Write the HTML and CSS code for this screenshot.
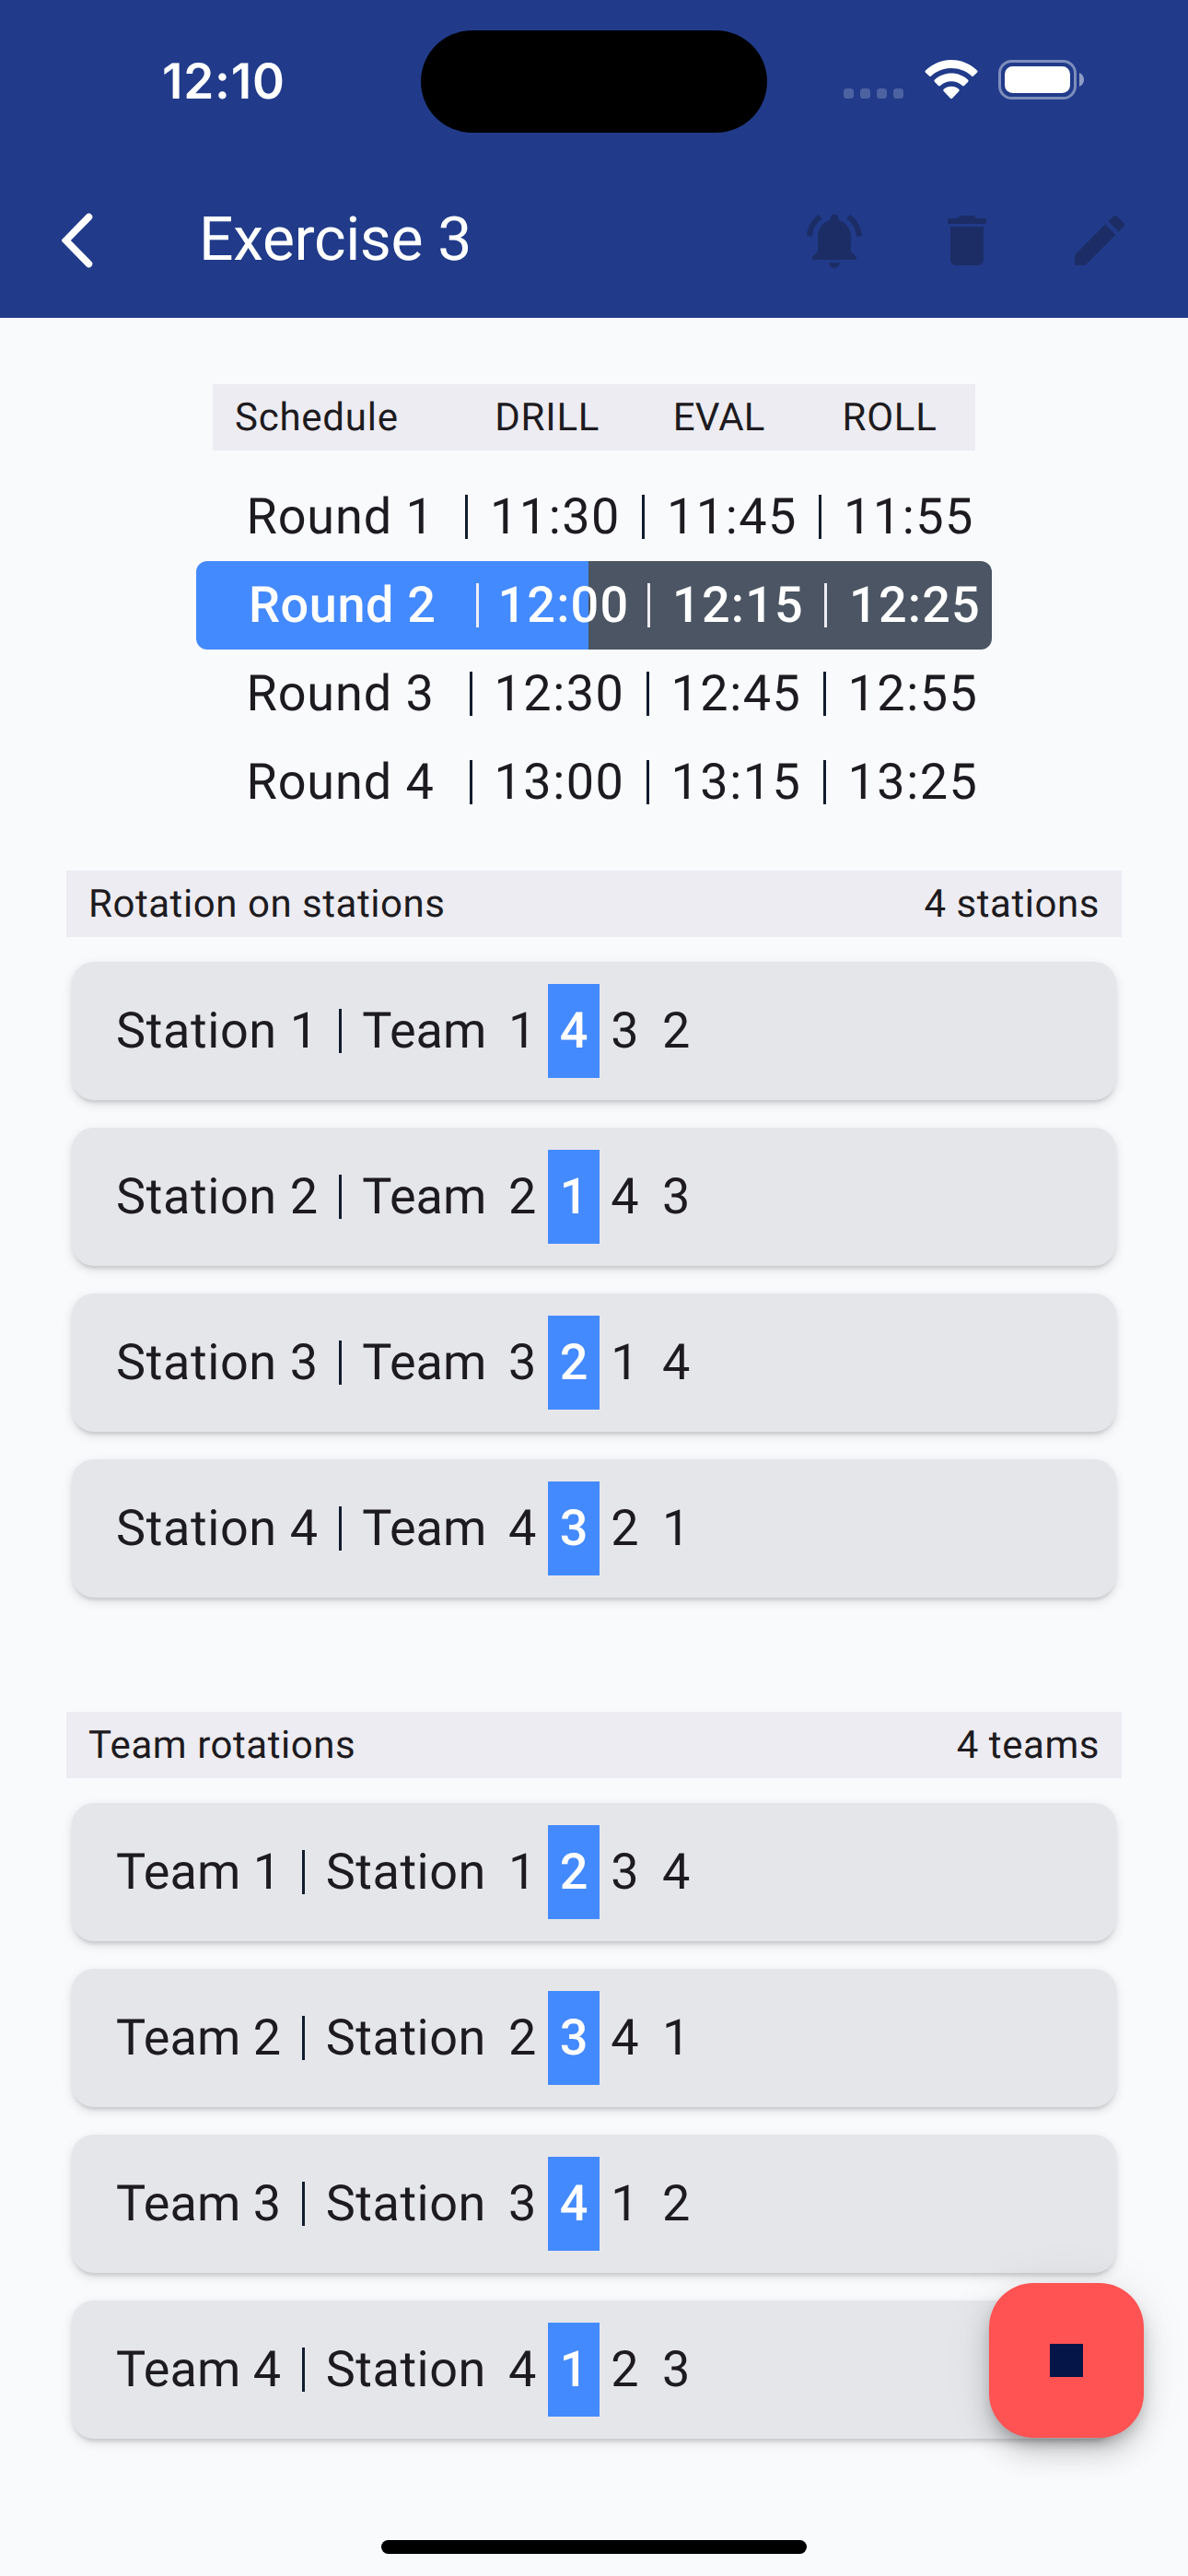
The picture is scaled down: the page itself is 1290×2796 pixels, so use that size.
FILE: index.html
```html
<!DOCTYPE html>
<html lang="en">
<head>
<meta charset="utf-8">
<title>Exercise 3</title>
<link rel="stylesheet" href="styles.css">
</head>
<body>
<div class="screen">
  <header class="top">
    <div class="status">
      <span class="clock">12:10</span>
      <div class="island"></div>
      <div class="signals">
        <svg class="dots" width="66" height="11" viewBox="0 0 66 11"><g fill="#fff" fill-opacity=".2"><rect width="11" height="11" rx="3.5"/><rect x="18" width="11" height="11" rx="3.5"/><rect x="36" width="11" height="11" rx="3.5"/><rect x="54" width="11" height="11" rx="3.5"/></g></svg>
        <svg class="wifi" width="58" height="43" viewBox="0 0 58 43" fill="#fff"><path d="M29 0C40 0 50 4.500 57 11.500Q58 12.700 57 13.800L53 17.600Q52 18.400 51 17.400C45 12 37.500 9 29 9S13 12 7 17.400Q6 18.400 5 17.600L1 13.800Q0 12.700 1 11.500C8 4.500 18 0 29 0Z"/><path d="M29 14.500C36 14.500 42.400 17.200 47 21.500Q48.200 22.800 47 24L43 28Q42 28.800 41 28C37.800 25 33.500 23.200 29 23.200S20.200 25 17 28Q16 28.800 15 28L11 24Q9.800 22.800 11 21.500C15.600 17.200 22 14.500 29 14.500Z"/><path d="M29 28.800C32.200 28.800 35 29.900 37.200 31.700Q38.400 32.900 37.300 34L30 41.800Q29 42.700 28 41.800L20.700 34Q19.600 32.900 20.800 31.700C23 29.900 25.800 28.800 29 28.800Z"/></svg>
        <svg class="battery" width="94" height="43" viewBox="0 0 94 43"><rect x="1.500" y="1.500" width="82" height="40" rx="13" fill="none" stroke="#fff" stroke-opacity=".42" stroke-width="3"/><rect x="7" y="7" width="71" height="29" rx="8.500" fill="#fff"/><path d="M88 14c3 1.200 5 4 5 7.500s-2 6.300-5 7.500Z" fill="#fff" fill-opacity=".5"/></svg>
      </div>
    </div>
    <div class="appbar">
      <svg class="back" width="34" height="60" viewBox="0 0 34 60"><path d="M29.500 4.500 4.500 30 29.500 55.500" fill="none" stroke="#fff" stroke-width="7.500" stroke-linecap="round" stroke-linejoin="miter"/></svg>
      <h1 class="title">Exercise 3</h1>
      <div class="actions">
        <svg class="icon" viewBox="0 0 24 24"><path d="M7.580 4.080 6.150 2.650C3.750 4.480 2.170 7.300 2.030 10.500h2c.15-2.650 1.510-4.970 3.550-6.420zM19.970 10.500h2c-.15-3.200-1.730-6.020-4.120-7.850l-1.420 1.430c2.020 1.450 3.390 3.770 3.540 6.420zM18 11c0-3.070-1.640-5.640-4.500-6.320V4c0-.83-.67-1.500-1.500-1.500s-1.500.67-1.500 1.500v.68C7.630 5.360 6 7.920 6 11v5l-2 2v1h16v-1l-2-2v-5zM12 22c.14 0 .27-.01.4-.04.65-.14 1.180-.58 1.440-1.180.1-.24.15-.5.15-.78h-4c.01 1.100.9 2 2.010 2z"/></svg>
        <svg class="icon" viewBox="0 0 24 24"><path d="M6 19c0 1.100.9 2 2 2h8c1.100 0 2-.9 2-2V7H6v12zM19 4h-3.500l-1-1h-5l-1 1H5v2h14V4z"/></svg>
        <svg class="icon" viewBox="0 0 24 24"><path d="M3 17.250V21h3.750L17.810 9.940l-3.750-3.750L3 17.250zM20.710 7.040c.39-.39.39-1.020 0-1.410l-2.340-2.340c-.39-.39-1.020-.39-1.410 0l-1.830 1.830 3.750 3.750 1.830-1.830z"/></svg>
      </div>
    </div>
  </header>

  <main class="content">
    <section class="schedule">
      <div class="schedule-head"><span class="col-name">Schedule</span><span class="col">DRILL</span><span class="col eval">EVAL</span><span class="col">ROLL</span></div>
      <div class="round round-first"><span class="round-name">Round 1</span><span class="time">11:30</span><span class="time">11:45</span><span class="time">11:55</span></div>
      <div class="round round-active"><span class="round-name">Round 2</span><span class="time">12:00</span><span class="time">12:15</span><span class="time">12:25</span></div>
      <div class="round"><span class="round-name">Round 3</span><span class="time">12:30</span><span class="time">12:45</span><span class="time">12:55</span></div>
      <div class="round"><span class="round-name">Round 4</span><span class="time">13:00</span><span class="time">13:15</span><span class="time">13:25</span></div>
    </section>

    <section class="group stations">
      <div class="group-head"><span>Rotation on stations</span><span>4 stations</span></div>
      <div class="cards">
        <div class="card"><span class="name">Station 1</span><span class="kind">Team</span><b class="n">1</b><b class="n on">4</b><b class="n">3</b><b class="n">2</b></div>
        <div class="card"><span class="name">Station 2</span><span class="kind">Team</span><b class="n">2</b><b class="n on">1</b><b class="n">4</b><b class="n">3</b></div>
        <div class="card"><span class="name">Station 3</span><span class="kind">Team</span><b class="n">3</b><b class="n on">2</b><b class="n">1</b><b class="n">4</b></div>
        <div class="card"><span class="name">Station 4</span><span class="kind">Team</span><b class="n">4</b><b class="n on">3</b><b class="n">2</b><b class="n">1</b></div>
      </div>
    </section>

    <section class="group teams">
      <div class="group-head"><span>Team rotations</span><span>4 teams</span></div>
      <div class="cards">
        <div class="card"><span class="name">Team 1</span><span class="kind">Station</span><b class="n">1</b><b class="n on">2</b><b class="n">3</b><b class="n">4</b></div>
        <div class="card"><span class="name">Team 2</span><span class="kind">Station</span><b class="n">2</b><b class="n on">3</b><b class="n">4</b><b class="n">1</b></div>
        <div class="card"><span class="name">Team 3</span><span class="kind">Station</span><b class="n">3</b><b class="n on">4</b><b class="n">1</b><b class="n">2</b></div>
        <div class="card"><span class="name">Team 4</span><span class="kind">Station</span><b class="n">4</b><b class="n on">1</b><b class="n">2</b><b class="n">3</b></div>
      </div>
    </section>
  </main>

  <button class="fab" aria-label="Stop"><span class="stop"></span></button>
  <div class="home"></div>
</div>
</body>
</html>
```

FILE: styles.css
```css
* { box-sizing: border-box; }
body { margin: 0; }

.screen {
  position: relative;
  width: 1290px;
  height: 2796px;
  overflow: hidden;
  background: #f9fafc;
  color: #1d1b20;
  font-family: Roboto, "Liberation Sans", sans-serif;
  font-size: 54px;
  text-rendering: geometricPrecision;
}

/* Status bar and app bar */
.top {
  height: 345px;
  background: #213b8a;
  color: #fff;
}
.status {
  display: flex;
  height: 177px;
  padding-left: 176px;
}
.clock {
  width: 281px;
  padding-top: 57px;
  font: 600 53px/62px Inter, sans-serif;
  letter-spacing: 0.8px;
}
.island {
  width: 376px;
  height: 111px;
  margin-top: 33px;
  border-radius: 56px;
  background: #000;
}
.signals {
  display: flex;
  align-items: flex-end;
  height: 43px;
  margin: 65px 0 0 83px;
}
.dots { margin-bottom: 1px; }
.wifi { margin-left: 22px; }
.battery { margin-left: 22px; }
.appbar {
  display: flex;
  align-items: center;
  height: 168px;
  padding: 0 60px 0 67px;
}
.title {
  margin: 0 0 0 115px;
  font-size: 66px;
  font-weight: 400;
  line-height: 84px;
  letter-spacing: -0.35px;
}
.actions {
  display: flex;
  gap: 72px;
  margin-left: auto;
}
.icon {
  width: 72px;
  height: 72px;
  fill: #1c2d66;
}

/* Schedule table */
.content { padding: 72px 72px 0; }
.schedule {
  width: 864px;
  margin: 0 141px;
}
.schedule-head {
  display: flex;
  align-items: center;
  width: 828px;
  height: 72px;
  margin: 0 18px 24px;
  padding: 1px 0 0 24px;
  background: #edecf2;
  font-size: 42px;
  letter-spacing: 0.75px;
}
.col-name { width: 247px; }
.col {
  width: 186.500px;
  text-align: center;
}
.eval {
  padding-left: 1px;
  letter-spacing: 0.2px;
}
.round {
  display: flex;
  align-items: center;
  height: 96px;
  padding-left: 54.500px;
  border-radius: 12px;
}
.round-name {
  flex: none;
  width: 242px;
  letter-spacing: 0.9px;
}
.round-first .round-name { width: 237.500px; }
.time {
  flex: none;
  width: 192px;
  padding: 1px 0 0 24px;
  border-left: 3px solid #111c2e;
  line-height: 47px;
  letter-spacing: 1.5px;
}
.round-active {
  padding-left: 57px;
  background: linear-gradient(90deg, #448aff 426px, #4b5563 426px);
  color: #fff;
  font-weight: 500;
}
.round-active .round-name {
  width: 247.400px;
  letter-spacing: 0.6px;
}
.round-active .time {
  border-color: #edecf2;
  letter-spacing: 1.2px;
}
.round-active .round-name + .time {
  width: 185.600px;
  padding-left: 20px;
}

/* Rotation groups */
.group-head {
  display: flex;
  align-items: center;
  justify-content: space-between;
  height: 72px;
  padding: 1px 24px 0;
  background: #edecf2;
  font-size: 42px;
  letter-spacing: 0.55px;
}
.stations { margin-top: 48px; }
.teams { margin-top: 124.400px; }
.cards {
  display: flex;
  flex-direction: column;
  gap: 30px;
  padding: 27px 6px 0;
}
.card {
  display: flex;
  align-items: center;
  height: 150px;
  padding-left: 48px;
  border-radius: 24px;
  background: #e5e6ea;
  box-shadow: 0 6px 3px -3px rgba(0, 0, 0, .06), 0 3px 4px rgba(0, 0, 0, .05), 0 4px 12px rgba(0, 0, 0, .12);
}
.name {
  width: 242.300px;
  letter-spacing: 0.6px;
}
.kind {
  width: 171.300px;
  padding: 1px 0 0 22px;
  border-left: 3px solid #111c2e;
  line-height: 47px;
  letter-spacing: 0;
}
.teams .name {
  width: 201.800px;
  letter-spacing: 0.1px;
}
.teams .kind {
  width: 211.800px;
  padding-left: 23px;
  letter-spacing: 0.5px;
}
.n {
  height: 102px;
  width: 55.600px;
  padding: 1px 0 0 12.500px;
  font-weight: 400;
  line-height: 101px;
}
.on {
  background: #448aff;
  color: #fff;
  font-weight: 500;
}

/* Floating stop button and home indicator */
.fab {
  position: absolute;
  left: 1074px;
  top: 2478px;
  display: grid;
  place-items: center;
  width: 168px;
  height: 168px;
  padding: 0;
  border: 0;
  border-radius: 48px;
  background: #ff5252;
  box-shadow: 0 9px 15px -3px rgba(0, 0, 0, .2), 0 18px 30px rgba(0, 0, 0, .14), 0 3px 54px rgba(0, 0, 0, .08);
}
.stop {
  width: 36px;
  height: 36px;
  background: #051547;
}
.home {
  position: absolute;
  left: 414px;
  top: 2757px;
  width: 462px;
  height: 15px;
  border-radius: 8px;
  background: #000;
}
```
